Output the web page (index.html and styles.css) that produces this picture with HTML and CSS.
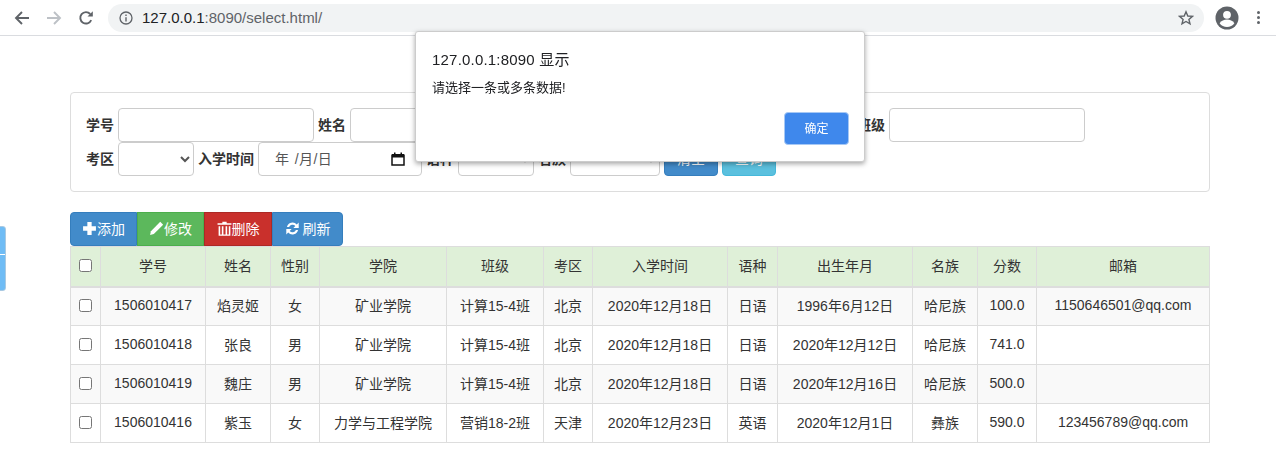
FILE: index.html
```html
<!DOCTYPE html>
<html lang="zh-CN">
<head>
<meta charset="UTF-8">
<title>select</title>
<link rel="stylesheet" href="styles.css">
</head>
<body>

<div class="topbar">
  <svg class="nav-icon" viewBox="0 0 16 16"><path d="M15 8H2.500M8 2 2 8l6 6" fill="none" stroke="#5f6368" stroke-width="1.900"/></svg>
  <svg class="nav-icon" viewBox="0 0 16 16"><path d="M1 8h12.500M8 2l6 6-6 6" fill="none" stroke="#bdc1c6" stroke-width="1.900"/></svg>
  <svg class="nav-icon" viewBox="0 0 16 16"><path d="M13.200 10.200A5.700 5.700 0 1 1 12.200 4" fill="none" stroke="#5f6368" stroke-width="1.900"/><path d="M9.500 6.600h5.300V1.300z" fill="#5f6368"/></svg>
  <div class="omnibox">
    <svg class="info-icon" viewBox="0 0 14 14"><circle cx="7" cy="7" r="6" fill="none" stroke="#5f6368" stroke-width="1.300"/><path d="M6.300 6.200h1.400v4.200H6.300zM6.300 3.600h1.400V5H6.300z" fill="#5f6368"/></svg>
    <span class="url"><b>127.0.0.1</b>:8090/select.html/</span>
    <svg class="star-icon" viewBox="0 0 16 16"><path d="M8 1.800l1.800 4.200 4.600.4-3.500 3 1.100 4.500L8 11.500l-4 2.400 1.100-4.500-3.500-3 4.600-.4z" fill="none" stroke="#5f6368" stroke-width="1.400"/></svg>
  </div>
  <svg class="avatar" viewBox="0 0 24 24"><circle cx="12" cy="12" r="11.500" fill="#5f6368"/><circle cx="12" cy="8.800" r="3.900" fill="#fff"/><path d="M4.600 17.200c1.600-2.600 4.600-3.800 7.400-3.800s5.800 1.200 7.400 3.800A9.400 9.400 0 0 1 12 21a9.400 9.400 0 0 1-7.400-3.800z" fill="#fff"/></svg>
  <div class="kebab"><i></i><i></i><i></i></div>
</div>

<div class="side-tab"></div>

<div class="content">
  <div class="search-panel">
    <div class="search-row">
      <label>学号</label><input class="text-input" type="text">
      <label>姓名</label><input class="text-input" type="text">
      <label>性别</label><select class="sel"></select>
      <label>学院</label><select class="sel sel-wide"></select>
      <label>班级</label><input class="text-input" type="text">
    </div>
    <div class="search-row">
      <label>考区</label><select class="sel"></select>
      <label>入学时间</label>
      <div class="date-input">
        <span>年 /月/日</span>
        <svg class="cal-icon" viewBox="0 0 14 14"><path d="M1 3.200h12v9.800H1z" fill="none" stroke="#111" stroke-width="1.500"/><path d="M1 2h12v3.500H1zM3 .5h1.500V2H3zM9.500 .5H11V2H9.500z" fill="#111"/></svg>
      </div>
      <label>语种</label><select class="sel"></select>
      <label>名族</label><select class="sel sel-mid"></select>
      <button class="btn btn-blue">清空</button>
      <button class="btn btn-cyan">查询</button>
    </div>
  </div>

  <div class="toolbar">
    <button class="tool tool-add">
      <svg viewBox="0 0 14 14"><path d="M5 1h4v4h4v4H9v4H5V9H1V5h4z" fill="#fff"/></svg>添加
    </button>
    <button class="tool tool-edit">
      <svg viewBox="0 0 14 14"><path d="M10.500.8l2.700 2.700-8.700 8.700L1 13l.8-3.500z" fill="#fff"/></svg>修改
    </button>
    <button class="tool tool-del">
      <svg viewBox="0 0 14 14"><path d="M5 .8h4v1.400h4.500v1.300H.5V2.200H5zM1.500 5H3v7.500h1.500V5H6v7.500h2V5h1.500v7.500H11V5h1.500v8.800h-11z" fill="#fff"/></svg>删除
    </button>
    <button class="tool tool-refresh">
      <svg viewBox="0 0 14 14"><path d="M1.800 5.600A5.400 5.400 0 0 1 11 3.200L12.800 1.500v5H7.800l1.800-1.800A3.400 3.400 0 0 0 3.800 5.600zM12.200 8.400A5.400 5.400 0 0 1 3 10.800L1.200 12.500v-5h5L4.400 9.300a3.400 3.400 0 0 0 5.800-.9z" fill="#fff"/></svg>刷新
    </button>
  </div>

  <table class="data-table">
    <colgroup>
      <col class="c-check"><col class="c-id"><col class="c-name"><col class="c-sex"><col class="c-college">
      <col class="c-class"><col class="c-area"><col class="c-date"><col class="c-lang"><col class="c-birth">
      <col class="c-nation"><col class="c-score"><col>
    </colgroup>
    <thead>
      <tr>
        <th><input type="checkbox"></th><th>学号</th><th>姓名</th><th>性别</th><th>学院</th><th>班级</th><th>考区</th>
        <th>入学时间</th><th>语种</th><th>出生年月</th><th>名族</th><th>分数</th><th>邮箱</th>
      </tr>
    </thead>
    <tbody>
      <tr>
        <td><input type="checkbox"></td><td>1506010417</td><td>焰灵姬</td><td>女</td><td>矿业学院</td><td>计算15-4班</td><td>北京</td>
        <td>2020年12月18日</td><td>日语</td><td>1996年6月12日</td><td>哈尼族</td><td>100.0</td><td>1150646501@qq.com</td>
      </tr>
      <tr>
        <td><input type="checkbox"></td><td>1506010418</td><td>张良</td><td>男</td><td>矿业学院</td><td>计算15-4班</td><td>北京</td>
        <td>2020年12月18日</td><td>日语</td><td>2020年12月12日</td><td>哈尼族</td><td>741.0</td><td></td>
      </tr>
      <tr>
        <td><input type="checkbox"></td><td>1506010419</td><td>魏庄</td><td>男</td><td>矿业学院</td><td>计算15-4班</td><td>北京</td>
        <td>2020年12月18日</td><td>日语</td><td>2020年12月16日</td><td>哈尼族</td><td>500.0</td><td></td>
      </tr>
      <tr>
        <td><input type="checkbox"></td><td>1506010416</td><td>紫玉</td><td>女</td><td>力学与工程学院</td><td>营销18-2班</td><td>天津</td>
        <td>2020年12月23日</td><td>英语</td><td>2020年12月1日</td><td>彝族</td><td>590.0</td><td>123456789@qq.com</td>
      </tr>
    </tbody>
  </table>
</div>

<div class="alert-box">
  <div class="alert-title">127.0.0.1:8090 显示</div>
  <div class="alert-msg">请选择一条或多条数据!</div>
  <div class="alert-foot"><button class="alert-ok">确定</button></div>
</div>

</body>
</html>
```

FILE: styles.css
```css
body {
  font-family: "Liberation Sans", "Noto Sans CJK SC", sans-serif;
  font-size: 14px;
  color: #333;
  margin: 0;
  padding: 0;
  overflow: hidden;
}

/* browser bar */
.topbar {
  display: flex;
  align-items: center;
  height: 35px;
  border-bottom: 1px solid #dadce0;
  padding-left: 14px;
}
.nav-icon {
  width: 16px;
  height: 16px;
  margin-right: 16px;
}
.omnibox {
  display: flex;
  align-items: center;
  flex: 1;
  height: 28px;
  margin-left: -2px;
  padding: 0 10px 0 11px;
  background-color: #f1f3f4;
  border-radius: 14px;
}
.info-icon {
  width: 14px;
  height: 14px;
  margin-right: 9px;
}
.url {
  flex: 1;
  font-size: 15px;
  color: #5f6368;
}
.url b {
  font-weight: normal;
  color: #202124;
}
.star-icon {
  width: 16px;
  height: 16px;
}
.avatar {
  width: 24px;
  height: 24px;
  margin-left: 11px;
}
.kebab {
  display: flex;
  flex-direction: column;
  gap: 2px;
  margin-left: 18px;
  margin-right: 16px;
}
.kebab i {
  display: block;
  width: 3px;
  height: 3px;
  border-radius: 50%;
  background-color: #5f6368;
}

.side-tab {
  position: absolute;
  left: -4px;
  top: 226px;
  width: 8px;
  height: 63px;
  background: linear-gradient(#6fbcf5 27px, #fff 27px, #fff 28px, #6fbcf5 28px);
  border: 1px solid #a9c9e2;
  border-radius: 3px;
}

.content {
  margin: 0 66px 0 70px;
  padding-top: 56px;
}

/* search form */
.search-panel {
  border: 1px solid #ddd;
  border-radius: 4px;
  padding: 15px;
  margin-bottom: 20px;
}
.search-row {
  display: flex;
  align-items: center;
  gap: 4px;
  height: 34px;
}
.search-row label {
  font-weight: bold;
  padding-bottom: 3px;
}
.text-input {
  box-sizing: border-box;
  width: 196px;
  height: 34px;
  border: 1px solid #ccc;
  border-radius: 4px;
  background-color: #fff;
  padding: 6px 12px;
}
.sel {
  box-sizing: border-box;
  width: 76px;
  height: 34px;
  border: 1px solid #ccc;
  border-radius: 4px;
  background-color: #fff;
  color: #555;
}
.sel-wide {
  width: 159px;
}
.sel-mid {
  width: 90px;
}
.date-input {
  box-sizing: border-box;
  display: flex;
  align-items: center;
  justify-content: space-between;
  width: 164px;
  height: 34px;
  border: 1px solid #ccc;
  border-radius: 4px;
  padding: 0 16px;
  color: #555;
}
.date-input span {
  padding-bottom: 2px;
  word-spacing: 1px;
  letter-spacing: 0.4px;
}
.cal-icon {
  width: 14px;
  height: 14px;
}
.btn {
  box-sizing: border-box;
  width: 54px;
  height: 34px;
  padding: 0 0 2px;
  border: 1px solid transparent;
  border-radius: 4px;
  color: #fff;
  font: inherit;
}
.btn-blue {
  background-color: #428bca;
  border-color: #357ebd;
}
.btn-cyan {
  background-color: #5bc0de;
  border-color: #46b8da;
}

/* toolbar */
.toolbar {
  display: flex;
  height: 34px;
}
.tool {
  display: flex;
  align-items: center;
  justify-content: center;
  box-sizing: border-box;
  height: 34px;
  padding: 0 0 2px;
  border: 1px solid transparent;
  color: #fff;
  font: inherit;
}
.tool svg {
  width: 15px;
  height: 15px;
}
.tool-add {
  width: 67px;
  background-color: #428bca;
  border-color: #357ebd;
  border-radius: 4px 0 0 4px;
}
.tool-edit {
  width: 67px;
  background-color: #5cb85c;
  border-color: #4cae4c;
}
.tool-del {
  width: 68px;
  background-color: #c9302c;
  border-color: #ac2925;
}
.tool-refresh {
  width: 71px;
  background-color: #428bca;
  border-color: #357ebd;
  border-radius: 0 4px 4px 0;
}
.tool-refresh svg {
  margin-right: 3px;
}

/* table */
.data-table {
  width: 100%;
  table-layout: fixed;
  border-collapse: collapse;
}
.data-table th,
.data-table td {
  box-sizing: border-box;
  border: 1px solid #ddd;
  padding: 0 0 2px;
  text-align: center;
  font-weight: normal;
  height: 39px;
}
.data-table th {
  background-color: #dff0d8;
  border-bottom-width: 2px;
  height: 40px;
}
.data-table tbody tr:nth-child(odd) {
  background-color: #f9f9f9;
}
.data-table input {
  margin: 0 0 1px;
  vertical-align: middle;
}
.c-check { width: 30px; }
.c-id { width: 105px; }
.c-name { width: 65px; }
.c-sex { width: 49px; }
.c-college { width: 127px; }
.c-class { width: 97px; }
.c-area { width: 49px; }
.c-date { width: 135px; }
.c-lang { width: 50px; }
.c-birth { width: 135px; }
.c-nation { width: 65px; }
.c-score { width: 59px; }

/* alert */
.alert-box {
  position: fixed;
  left: 415px;
  top: 31px;
  box-sizing: border-box;
  width: 450px;
  height: 131px;
  padding: 19px 15px 0 16px;
  background-color: #fff;
  border: 1px solid #ccc;
  border-radius: 3px;
  box-shadow: 0 2px 5px rgba(0, 0, 0, 0.35);
  color: #202124;
}
.alert-title {
  font-size: 15px;
  line-height: 18px;
  letter-spacing: 0.2px;
}
.alert-msg {
  font-size: 13px;
  line-height: 18px;
  margin-top: 10px;
}
.alert-foot {
  display: flex;
  justify-content: flex-end;
  margin-top: 15px;
}
.alert-ok {
  width: 65px;
  height: 33px;
  padding: 0 0 2px;
  background-color: #3f88ec;
  border: 1px solid #a6c8f5;
  border-radius: 4px;
  color: #fff;
  font: inherit;
  font-size: 12px;
}
```
